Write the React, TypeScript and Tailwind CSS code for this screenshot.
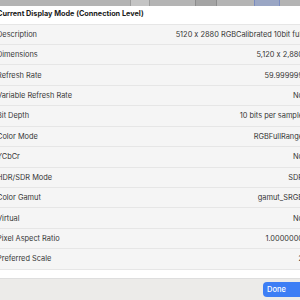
const rows: [string, string][] = [
  ['Description', '5120 x 2880 RGBCalibrated 10bit full'],
  ['Dimensions', '5,120 x 2,880'],
  ['Refresh Rate', '59.999999'],
  ['Variable Refresh Rate', 'No'],
  ['Bit Depth', '10 bits per sample'],
  ['Color Mode', 'RGBFullRange'],
  ['YCbCr', 'No'],
  ['HDR/SDR Mode', 'SDR'],
  ['Color Gamut', 'gamut_SRGB'],
  ['Virtual', 'No'],
  ['Pixel Aspect Ratio', '1.0000000'],
  ['Preferred Scale', '2'],
];

const App = () => {
  return (
    <div
      className="w-[300px] h-[300px] overflow-hidden bg-white text-[#363636] [font-feature-settings:'calt'_0]"
      style={{ fontFamily: 'Inter, "Liberation Sans", sans-serif' }}
    >
      {/* window behind the sheet */}
      <div className="h-[6px] bg-[#b4b4b4] flex">
        <div className="w-[130px]" />
        <div className="w-[20px] bg-[#c4c4c4] border-x border-[#9c9c9c]" />
        <div className="w-[45px]" />
        <div className="w-[22px] bg-[#a4a4a4] border-x border-[#8c8c8c]" />
        <div className="w-[37px]" />
        <div className="w-[26px] bg-[#9aa6c4] border-x border-[#7a8cc0]" />
      </div>

      <div className="ml-[-3px] mr-[-3px]">
        <div className="h-[17.5px] flex items-center text-[7.3px] font-bold text-[#1a1a1a]">
          Current Display Mode (Connection Level)
        </div>
        {rows.map(([k, v]) => (
          <div key={k} className="h-[20.45px] flex items-center justify-between bg-[#f5f5f5] border-t border-[#e6e6e6] text-[7.4px]">
            <span>{k}</span>
            <span>{v}</span>
          </div>
        ))}
        <div className="h-[9.5px] border-t border-[#e6e6e6]" />
      </div>

      <div className="h-[22px] bg-[#ecebe9] border-t border-[#dedede] flex items-center justify-end">
        <button className="h-[15px] w-[40px] mr-[-3px] rounded-[4px] bg-[#3d7ef5] text-white text-[7.5px] font-medium text-left pl-[4px]">
          Done
        </button>
      </div>
    </div>
  );
};

export default App;
